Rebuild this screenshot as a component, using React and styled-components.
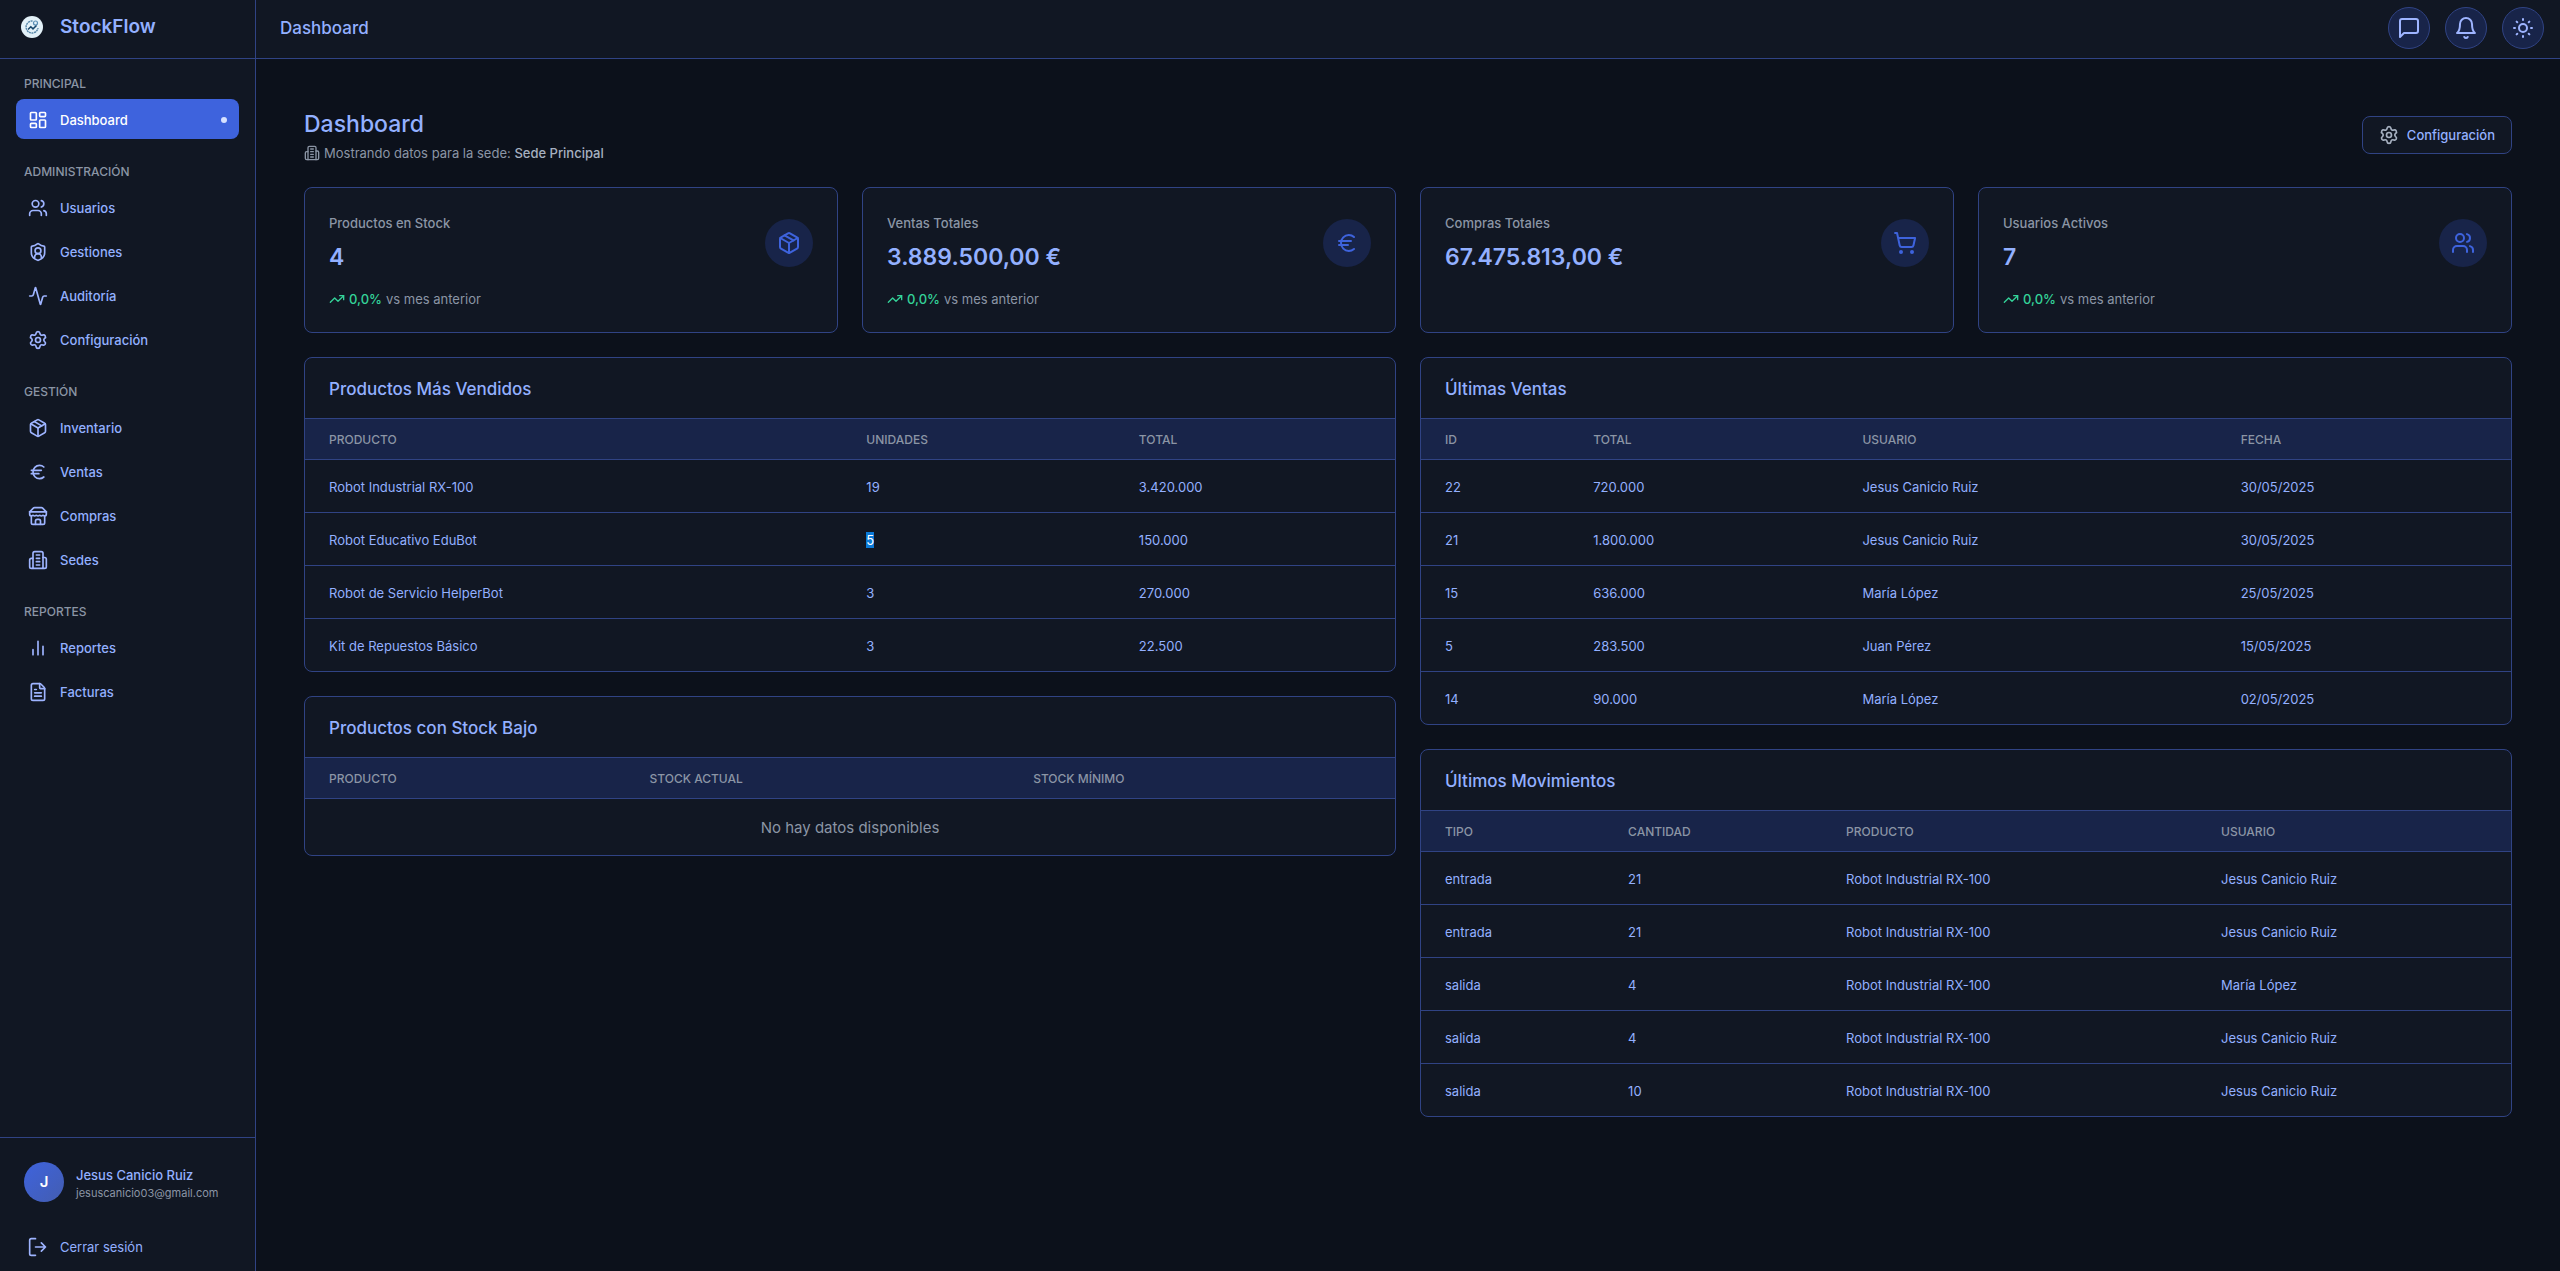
import React from 'react';
import styled, { createGlobalStyle, css } from 'styled-components';
import {
  LayoutDashboard, Users, Activity, Settings, Package, Euro, FileText,
  TrendingUp, ShoppingCart,
} from 'lucide-react';

const c = {
  bg: '#0c111b',
  panel: '#111723',
  soft: '#182449',
  line: '#304384',
  accent: '#3e63dd',
  text: '#93b0ff',
  icon: '#9eb4ff',
  muted: '#8b95a5',
  green: '#34d399',
};

const GlobalStyle = createGlobalStyle`
  *, *::before, *::after { box-sizing: border-box; }
  body {
    margin: 0;
    background: ${c.bg};
    color: ${c.text};
    font: 400 13px/20px Inter, "Liberation Sans", sans-serif;
  }
  h1, h2, h3, p, ul { margin: 0; padding: 0; font-weight: 500; }
  ul { list-style: none; }
  a { color: inherit; text-decoration: none; }
  button { font: inherit; color: inherit; cursor: pointer; }
  svg { flex: none; display: block; }
`;

const Shell = styled.div`
  display: grid;
  grid-template-columns: 256px minmax(0, 1fr);
  height: 100vh;
`;

const Sidebar = styled.aside`
  display: flex;
  flex-direction: column;
  background: ${c.panel};
  border-right: 1px solid ${c.line};
`;

const Brand = styled.div`
  display: flex;
  align-items: center;
  gap: 16px;
  height: 59px;
  padding: 0 20px 4px;
  border-bottom: 1px solid ${c.line};
  font-size: 19px;
  line-height: 28px;
  font-weight: 600;
`;

const Nav = styled.nav`
  flex: 1;
  display: flex;
  flex-direction: column;
  gap: 24px;
  padding: 16px;
`;

const NavTitle = styled.h3`
  padding: 1px 8px 0;
  margin-bottom: 7px;
  font-size: 12px;
  line-height: 16px;
  color: ${c.muted};
  text-transform: uppercase;
`;

const NavList = styled.ul`
  display: flex;
  flex-direction: column;
  gap: 4px;
`;

const itemStyle = css`
  display: flex;
  align-items: center;
  gap: 12px;
  width: 100%;
  height: 40px;
  padding: 1px 12px 0;
  border: 0;
  border-radius: 8px;
  background: transparent;
  font-weight: 500;
  svg { color: ${c.icon}; }
`;

const NavLink = styled.a`
  ${itemStyle}
  ${(p) => p.$active && css`
    background: ${c.accent};
    color: #fff;
    svg { color: #fff; }
    &::after {
      content: '';
      width: 6px;
      height: 6px;
      margin-left: auto;
      border-radius: 50%;
      background: #d6e1ff;
    }
  `}
`;

const LogoutButton = styled.button`
  ${itemStyle}
  font-weight: 400;
`;

const SideFooter = styled.div`
  display: flex;
  flex-direction: column;
  gap: 16px;
  padding: 16px 16px 5px;
  border-top: 1px solid ${c.line};
`;

const Profile = styled.div`
  display: flex;
  align-items: center;
  gap: 12px;
  padding: 8px;
`;

const Avatar = styled.div`
  display: grid;
  place-items: center;
  width: 40px;
  height: 40px;
  border-radius: 50%;
  background: linear-gradient(135deg, #3e63dd, #435db1);
  color: #fff;
  font-size: 15px;
  font-weight: 600;
`;

const ProfileText = styled.div`
  padding-top: 2px;
`;

const ProfileName = styled.p`
  font-weight: 500;
`;

const ProfileMail = styled.p`
  font-size: 11px;
  line-height: 16px;
  font-weight: 400;
  color: ${c.muted};
`;

const Main = styled.div`
  display: flex;
  flex-direction: column;
  min-width: 0;
`;

const Topbar = styled.header`
  display: flex;
  align-items: center;
  justify-content: space-between;
  height: 59px;
  padding: 0 16px 3px 24px;
  background: ${c.panel};
  border-bottom: 1px solid ${c.line};
`;

const TopTitle = styled.h2`
  font-size: 17px;
  line-height: 28px;
`;

const Actions = styled.div`
  display: flex;
  gap: 15px;
`;

const RoundButton = styled.button`
  display: grid;
  place-items: center;
  width: 42px;
  height: 42px;
  padding: 0;
  border: 1px solid ${c.line};
  border-radius: 50%;
  background: ${c.soft};
  color: ${c.icon};
`;

const Content = styled.main`
  display: flex;
  flex-direction: column;
  gap: 24px;
  padding: 48px;
`;

const PageHead = styled.div`
  display: flex;
  align-items: center;
  justify-content: space-between;
`;

const PageTitle = styled.h1`
  padding-top: 1px;
  font-size: 23px;
  line-height: 32px;
`;

const PageSub = styled.p`
  display: flex;
  align-items: center;
  gap: 4px;
  margin-top: 3px;
  font-weight: 400;
  color: ${c.muted};
  strong { font-weight: 500; color: #a6b0c0; }
`;

const ConfigButton = styled.button`
  display: flex;
  align-items: center;
  gap: 8px;
  padding: 8px 16px;
  border: 1px solid ${c.line};
  border-radius: 8px;
  background: ${c.panel};
  font-weight: 500;
  svg { color: #a6b0c0; }
`;

const Stats = styled.section`
  display: grid;
  grid-template-columns: repeat(4, minmax(0, 1fr));
  gap: 24px;
`;

const StatCard = styled.article`
  display: flex;
  flex-direction: column;
  gap: 16px;
  padding: 25px 24px 23px;
  border: 1px solid ${c.line};
  border-radius: 8px;
  background: ${c.panel};
`;

const StatTop = styled.div`
  display: flex;
  align-items: center;
  justify-content: space-between;
`;

const StatLabel = styled.p`
  margin-bottom: 8px;
  color: ${c.muted};
`;

const StatValue = styled.p`
  font-size: 23px;
  line-height: 32px;
  font-weight: 600;
`;

const StatIcon = styled.div`
  display: grid;
  place-items: center;
  width: 48px;
  height: 48px;
  border-radius: 50%;
  background: ${c.soft};
  color: ${c.accent};
`;

const Delta = styled.p`
  display: flex;
  align-items: center;
  gap: 4px;
  font-weight: 400;
  color: ${c.muted};
  svg, strong { color: ${c.green}; }
  strong { font-weight: 500; }
`;

const Columns = styled.section`
  display: grid;
  grid-template-columns: repeat(2, minmax(0, 1fr));
  gap: 24px;
  align-items: start;
`;

const Column = styled.div`
  display: flex;
  flex-direction: column;
  gap: 24px;
`;

const Panel = styled.article`
  overflow: hidden;
  border: 1px solid ${c.line};
  border-radius: 8px;
  background: ${c.panel};
`;

const PanelTitle = styled.h2`
  padding: 17px 24px 15px;
  border-bottom: 1px solid ${c.line};
  font-size: 17px;
  line-height: 28px;
`;

const Table = styled.table`
  width: 100%;
  table-layout: fixed;
  border-collapse: separate;
  border-spacing: 0;
  text-align: left;
`;

const Th = styled.th`
  width: ${(p) => p.$width}%;
  padding: 13px 24px 11px;
  border-bottom: 1px solid ${c.line};
  background: ${c.soft};
  color: ${c.muted};
  font-size: 12px;
  line-height: 16px;
  font-weight: 500;
  text-transform: uppercase;
`;

const Td = styled.td`
  padding: 17px 24px 15px;
  border-bottom: 1px solid ${c.line};
  tr:last-child > & { border-bottom: 0; }
`;

const Empty = styled(Td)`
  color: ${c.muted};
  font-size: 15px;
  line-height: 24px;
  text-align: center;
`;

const Highlight = styled.mark`
  background: #0b7ad8;
  color: #fff;
`;

const Logo = () => (
  <svg width="24" height="24" viewBox="0 0 24 24" fill="none" aria-hidden="true">
    <circle cx="12" cy="12" r="11" fill="#e3f1f8" />
    <path d="M12.500 6A6 6 0 1 0 18 13" stroke="#5686a8" strokeWidth="1.400" strokeDasharray="2 .6" />
    <circle cx="15.500" cy="8" r="2" stroke="#5b8fb5" strokeWidth="1.200" />
    <path d="m8 14.500 2.800-2.800 2.200 2.200 3.500-3.400" stroke="#17466b" strokeWidth="1.500" />
  </svg>
);

const Line = ({ size = 20, children }) => (
  <svg width={size} height={size} viewBox="0 0 24 24" fill="none" stroke="currentColor" strokeWidth="2" strokeLinecap="round" strokeLinejoin="round" aria-hidden="true">
    {children}
  </svg>
);

const ShieldUser = (p) => (
  <Line {...p}>
    <path d="M20 13c0 5-3.500 7.500-7.660 8.950a1 1 0 0 1-.67-.01C7.500 20.500 4 18 4 13V6a1 1 0 0 1 1-1c2 0 4.500-1.200 6.240-2.720a1.170 1.170 0 0 1 1.520 0C14.510 3.810 17 5 19 5a1 1 0 0 1 1 1z" />
    <circle cx="12" cy="10.500" r="3.500" />
    <path d="M8 18.500v-.5a4 4 0 0 1 8 0v.5" />
  </Line>
);

const Building = (p) => (
  <Line {...p}>
    <path d="M6 22V4a2 2 0 0 1 2-2h8a2 2 0 0 1 2 2v18Z" />
    <path d="M6 10H4a2 2 0 0 0-2 2v8a2 2 0 0 0 2 2h2M18 9h2a2 2 0 0 1 2 2v9a2 2 0 0 1-2 2h-2" />
    <path d="M10 6h4M10 10h4M10 14h4M10 18h4" />
  </Line>
);

const Store = (p) => (
  <Line {...p}>
    <path d="m2 7 4.410-4.410A2 2 0 0 1 7.830 2h8.340a2 2 0 0 1 1.420.59L22 7" />
    <path d="M4 12v8a2 2 0 0 0 2 2h12a2 2 0 0 0 2-2v-8" />
    <path d="M15 22v-4a2 2 0 0 0-2-2h-2a2 2 0 0 0-2 2v4M2 7h20" />
    <path d="M22 7v3a2 2 0 0 1-2 2a2.700 2.700 0 0 1-1.590-.63.7.7 0 0 0-.82 0A2.700 2.700 0 0 1 16 12a2.700 2.700 0 0 1-1.590-.63.7.7 0 0 0-.82 0A2.700 2.700 0 0 1 12 12a2.700 2.700 0 0 1-1.590-.63.7.7 0 0 0-.82 0A2.700 2.700 0 0 1 8 12a2.700 2.700 0 0 1-1.590-.63.7.7 0 0 0-.82 0A2.700 2.700 0 0 1 4 12a2 2 0 0 1-2-2V7" />
  </Line>
);

const Bars = (p) => (
  <Line {...p}>
    <path d="M6 20v-6M12 20V4M18 20V10" />
  </Line>
);

const Exit = (p) => (
  <Line {...p}>
    <path d="M9 22H4a2 2 0 0 1-2-2V4a2 2 0 0 1 2-2h5M9 12h12M16 7l5 5-5 5" />
  </Line>
);

const Message = (p) => (
  <Line {...p}>
    <path d="M21 15a2 2 0 0 1-2 2H7l-4 4V5a2 2 0 0 1 2-2h14a2 2 0 0 1 2 2z" />
  </Line>
);

const Bell = (p) => (
  <Line {...p}>
    <path d="M6 8a6 6 0 0 1 12 0c0 7 3 9 3 9H3s3-2 3-9" />
    <path d="M10.300 21a1.940 1.940 0 0 0 3.400 0" />
  </Line>
);

const Sun = (p) => (
  <Line {...p}>
    <circle cx="12" cy="12" r="4" />
    <path d="M12 3v1M12 20v1M3 12h1M20 12h1M18.400 5.600l-.7.7M6.300 17.700l-.7.7M5.600 5.600l.7.7M17.700 17.700l.7.7" />
  </Line>
);

const sections = [
  ['Principal', [['Dashboard', LayoutDashboard]]],
  ['Administración', [['Usuarios', Users], ['Gestiones', ShieldUser], ['Auditoría', Activity], ['Configuración', Settings]]],
  ['Gestión', [['Inventario', Package], ['Ventas', Euro], ['Compras', Store], ['Sedes', Building]]],
  ['Reportes', [['Reportes', Bars], ['Facturas', FileText]]],
];

const stats = [
  ['Productos en Stock', '4', Package, true],
  ['Ventas Totales', '3.889.500,00 €', Euro, true],
  ['Compras Totales', '67.475.813,00 €', ShoppingCart, false],
  ['Usuarios Activos', '7', Users, true],
];

const RX = 'Robot Industrial RX-100';
const JESUS = 'Jesus Canicio Ruiz';
const MARIA = 'María López';

const leftTables = [
  {
    title: 'Productos Más Vendidos',
    columns: [['Producto', 49.3], ['Unidades', 25], ['Total', 25.7]],
    rows: [
      [RX, '19', '3.420.000'],
      ['Robot Educativo EduBot', <Highlight key="units">5</Highlight>, '150.000'],
      ['Robot de Servicio HelperBot', '3', '270.000'],
      ['Kit de Repuestos Básico', '3', '22.500'],
    ],
  },
  {
    title: 'Productos con Stock Bajo',
    columns: [['Producto', 29.4], ['Stock actual', 35.2], ['Stock mínimo', 35.4]],
    rows: [],
  },
];

const rightTables = [
  {
    title: 'Últimas Ventas',
    columns: [['ID', 13.6], ['Total', 24.7], ['Usuario', 34.7], ['Fecha', 27]],
    rows: [
      ['22', '720.000', JESUS, '30/05/2025'],
      ['21', '1.800.000', JESUS, '30/05/2025'],
      ['15', '636.000', MARIA, '25/05/2025'],
      ['5', '283.500', 'Juan Pérez', '15/05/2025'],
      ['14', '90.000', MARIA, '02/05/2025'],
    ],
  },
  {
    title: 'Últimos Movimientos',
    columns: [['Tipo', 16.8], ['Cantidad', 20], ['Producto', 34.4], ['Usuario', 28.8]],
    rows: [
      ['entrada', '21', RX, JESUS],
      ['entrada', '21', RX, JESUS],
      ['salida', '4', RX, MARIA],
      ['salida', '4', RX, JESUS],
      ['salida', '10', RX, JESUS],
    ],
  },
];

const DataPanel = ({ title, columns, rows }) => (
  <Panel>
    <PanelTitle>{title}</PanelTitle>
    <Table aria-label={title}>
      <thead>
        <tr>{columns.map(([name, width]) => <Th key={name} scope="col" $width={width}>{name}</Th>)}</tr>
      </thead>
      <tbody>
        {rows.length === 0 && <tr><Empty colSpan={columns.length}>No hay datos disponibles</Empty></tr>}
        {rows.map((row, i) => <tr key={i}>{row.map((cell, j) => <Td key={j}>{cell}</Td>)}</tr>)}
      </tbody>
    </Table>
  </Panel>
);

export default function App() {
  return (
    <>
      <GlobalStyle />
      <Shell>
        <Sidebar>
          <Brand><Logo />StockFlow</Brand>
          <Nav>
            {sections.map(([title, items]) => (
              <div key={title}>
                <NavTitle>{title}</NavTitle>
                <NavList>
                  {items.map(([label, Icon]) => (
                    <li key={label}>
                      <NavLink href="#" $active={label === 'Dashboard'}><Icon size={20} />{label}</NavLink>
                    </li>
                  ))}
                </NavList>
              </div>
            ))}
          </Nav>
          <SideFooter>
            <Profile>
              <Avatar>J</Avatar>
              <ProfileText>
                <ProfileName>Jesus Canicio Ruiz</ProfileName>
                <ProfileMail>jesuscanicio03@gmail.com</ProfileMail>
              </ProfileText>
            </Profile>
            <LogoutButton type="button"><Exit />Cerrar sesión</LogoutButton>
          </SideFooter>
        </Sidebar>
        <Main>
          <Topbar>
            <TopTitle>Dashboard</TopTitle>
            <Actions>
              <RoundButton type="button" aria-label="Mensajes"><Message size={24} /></RoundButton>
              <RoundButton type="button" aria-label="Notificaciones"><Bell size={24} /></RoundButton>
              <RoundButton type="button" aria-label="Tema"><Sun size={24} /></RoundButton>
            </Actions>
          </Topbar>
          <Content>
            <PageHead>
              <div>
                <PageTitle>Dashboard</PageTitle>
                <PageSub><Building size={16} /><span>Mostrando datos para la sede: <strong>Sede Principal</strong></span></PageSub>
              </div>
              <ConfigButton type="button"><Settings size={20} />Configuración</ConfigButton>
            </PageHead>
            <Stats>
              {stats.map(([label, value, Icon, hasDelta]) => (
                <StatCard key={label}>
                  <StatTop>
                    <div>
                      <StatLabel>{label}</StatLabel>
                      <StatValue>{value}</StatValue>
                    </div>
                    <StatIcon><Icon size={24} /></StatIcon>
                  </StatTop>
                  {hasDelta && <Delta><TrendingUp size={16} /><strong>0,0%</strong><span>vs mes anterior</span></Delta>}
                </StatCard>
              ))}
            </Stats>
            <Columns>
              <Column>{leftTables.map((t) => <DataPanel key={t.title} {...t} />)}</Column>
              <Column>{rightTables.map((t) => <DataPanel key={t.title} {...t} />)}</Column>
            </Columns>
          </Content>
        </Main>
      </Shell>
    </>
  );
}
